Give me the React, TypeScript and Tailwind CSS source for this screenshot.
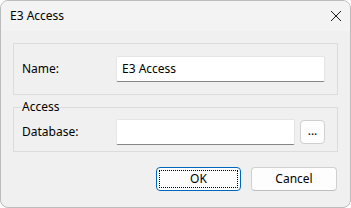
import React from 'react';

function CloseIcon() {
  return (
    <svg width="12" height="12" viewBox="0 0 12 12" className="block">
      <path d="M1 1 L11 11 M11 1 L1 11" stroke="#1a1a1a" strokeWidth="1" fill="none" />
    </svg>
  );
}

function TextBox({ value, width }: { value?: string; width: string }) {
  return (
    <div
      className={`${width} h-[26px] bg-white border border-[#e5e5e5] border-b-[#868686] rounded-[2px] flex items-center pl-[5px] text-[12px] text-black`}
    >
      {value}
    </div>
  );
}

export default function App() {
  return (
    <div className="w-[351px] h-[208px] bg-white font-['Noto_Sans',sans-serif] text-[12px] text-black">
      <div className="h-full flex flex-col rounded-[8px] border border-[#bcbcbc] bg-[#f0f0f0] overflow-hidden">
        {/* title bar */}
        <div className="h-[30px] shrink-0 bg-[#f3f3f3] flex items-center justify-between pl-[9px] pr-[8px]">
          <span className="leading-none">E3 Access</span>
          <CloseIcon />
        </div>

        <div className="flex-1 px-[12px] pt-[12px]">
          {/* Name group */}
          <div className="h-[52px] border border-[#dcdcdc] flex items-start pl-[8px] pr-[12px] pt-[12px]">
            <span className="w-[94px] h-[26px] flex items-center">Name:</span>
            <TextBox value="E3 Access" width="w-[209px]" />
          </div>

          {/* Access group */}
          <fieldset className="mt-[4px] border border-[#dcdcdc] pl-[8px] pr-[12px] pb-[6px]">
            <legend className="leading-[16px] px-[1px] -ml-[1px]">Access</legend>
            <div className="flex items-center pt-[4px]">
              <span className="w-[94px]">Database:</span>
              <TextBox width="w-[179px]" />
              <button className="ml-[5px] w-[25px] h-[24px] bg-[#fdfdfd] border border-[#d0d0d0] rounded-[4px] flex items-center justify-center leading-none pb-[2px]">
                ...
              </button>
            </div>
          </fieldset>

          {/* buttons */}
          <div className="flex justify-end gap-[10px] mt-[15px] mr-[1px]">
            <button className="relative w-[85px] h-[24px] bg-[#fdfdfd] border border-[#0067c0] rounded-[4px] flex items-center justify-center">
              OK
              <span className="absolute inset-[2px] border border-dotted border-black" />
            </button>
            <button className="w-[86px] h-[24px] bg-[#fdfdfd] border border-[#d0d0d0] border-b-[#bdbdbd] rounded-[4px] flex items-center justify-center">
              Cancel
            </button>
          </div>
        </div>
      </div>
    </div>
  );
}
